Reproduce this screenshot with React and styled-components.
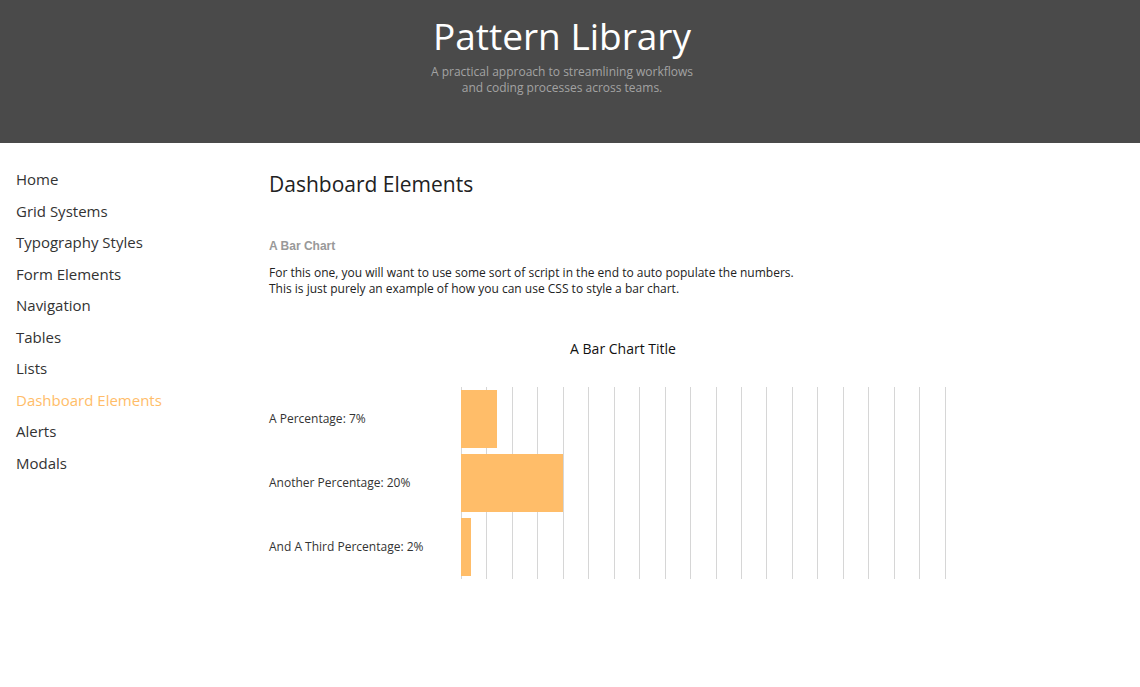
import React from 'react';
import styled, { createGlobalStyle } from 'styled-components';

const GlobalStyle = createGlobalStyle`
  html, body {
    margin: 0;
    padding: 0;
    background: #fff;
    font-family: "Open Sans", "Liberation Sans", sans-serif;
    color: #333;
  }
  * { box-sizing: border-box; }
`;

// vertical guide every 5%, snapped to whole pixels so the lines stay crisp
const PLOT_WIDTH = 509;
const gridOffsets = Array.from({ length: 20 }, (_, i) => Math.round((i * PLOT_WIDTH) / 20));

const Header = styled.header`
  height: 143px;
  background: #4a4a4a;
  display: flex;
  flex-direction: column;
  align-items: center;
  padding: 12px 16px 0 0;
`;

const SiteTitle = styled.h1`
  margin: 0;
  font-size: 37px;
  line-height: 48px;
  font-weight: 400;
  color: #fff;
`;

const Tagline = styled.p`
  margin: 4px 0 0;
  font-size: 12px;
  line-height: 16px;
  color: #a3a3a3;
  text-align: center;
`;

const Body = styled.div`
  display: flex;
  padding: 21px 16px;
`;

const Sidebar = styled.nav`
  width: 253px;
  flex-shrink: 0;
`;

const NavList = styled.ul`
  list-style: none;
  margin: 0;
  padding: 0;
`;

const NavItem = styled.li`
  font-size: 15px;
  line-height: 31.5px;
  color: ${p => (p.$active ? '#ffbd69' : '#333')};
`;

const Main = styled.main`
  flex: 1;
  max-width: 708px;
`;

const PageTitle = styled.h2`
  margin: 6px 0 0;
  font-size: 21px;
  line-height: 28px;
  font-weight: 400;
  color: #222;
`;

const SectionLabel = styled.h3`
  margin: 40px 0 0;
  font-family: "Liberation Sans", Arial, sans-serif;
  font-size: 12px;
  line-height: 16px;
  font-weight: 700;
  color: #999;
`;

const Intro = styled.p`
  margin: 11px 0 0;
  font-size: 12px;
  line-height: 16px;
  color: #222;
`;

const ChartTitle = styled.div`
  margin-top: 42px;
  text-align: center;
  font-size: 14px;
  line-height: 20px;
  color: #111;
`;

const Chart = styled.div`
  margin-top: 28px;
  display: grid;
  grid-template-columns: 192px ${PLOT_WIDTH}px;
`;

const Labels = styled.div`
  display: flex;
  flex-direction: column;
`;

const Label = styled.div`
  height: 64px;
  display: flex;
  align-items: center;
  padding-bottom: 2px;
  font-size: 12px;
  color: #333;
`;

const Plot = styled.div`
  display: flex;
  flex-direction: column;
  background-image: ${gridOffsets.map(() => 'linear-gradient(#d6d6d6, #d6d6d6)').join(', ')};
  background-size: 1px 100%;
  background-repeat: no-repeat;
  background-position: ${gridOffsets.map(x => `${x}px 0`).join(', ')};
`;

const Row = styled.div`
  height: 64px;
  padding: 3px 0;
`;

const Bar = styled.div`
  height: 100%;
  background: #ffbd69;
`;

const navItems = [
  'Home',
  'Grid Systems',
  'Typography Styles',
  'Form Elements',
  'Navigation',
  'Tables',
  'Lists',
  'Dashboard Elements',
  'Alerts',
  'Modals',
];

const data = [
  { label: 'A Percentage', value: 7 },
  { label: 'Another Percentage', value: 20 },
  { label: 'And A Third Percentage', value: 2 },
];

export default function App() {
  return (
    <>
      <GlobalStyle />
      <Header>
        <SiteTitle>Pattern Library</SiteTitle>
        <Tagline>
          A practical approach to streamlining workflows
          <br />
          and coding processes across teams.
        </Tagline>
      </Header>
      <Body>
        <Sidebar>
          <NavList>
            {navItems.map(item => (
              <NavItem key={item} $active={item === 'Dashboard Elements'}>
                {item}
              </NavItem>
            ))}
          </NavList>
        </Sidebar>
        <Main>
          <PageTitle>Dashboard Elements</PageTitle>
          <SectionLabel>A Bar Chart</SectionLabel>
          <Intro>
            For this one, you will want to use some sort of script in the end to auto populate the numbers.
            <br />
            This is just purely an example of how you can use CSS to style a bar chart.
          </Intro>
          <ChartTitle>A Bar Chart Title</ChartTitle>
          <Chart>
            <Labels>
              {data.map(d => (
                <Label key={d.label}>{d.label}: {d.value}%</Label>
              ))}
            </Labels>
            <Plot>
              {data.map(d => (
                <Row key={d.label}>
                  <Bar style={{ width: `${d.value}%` }} />
                </Row>
              ))}
            </Plot>
          </Chart>
        </Main>
      </Body>
    </>
  );
}
